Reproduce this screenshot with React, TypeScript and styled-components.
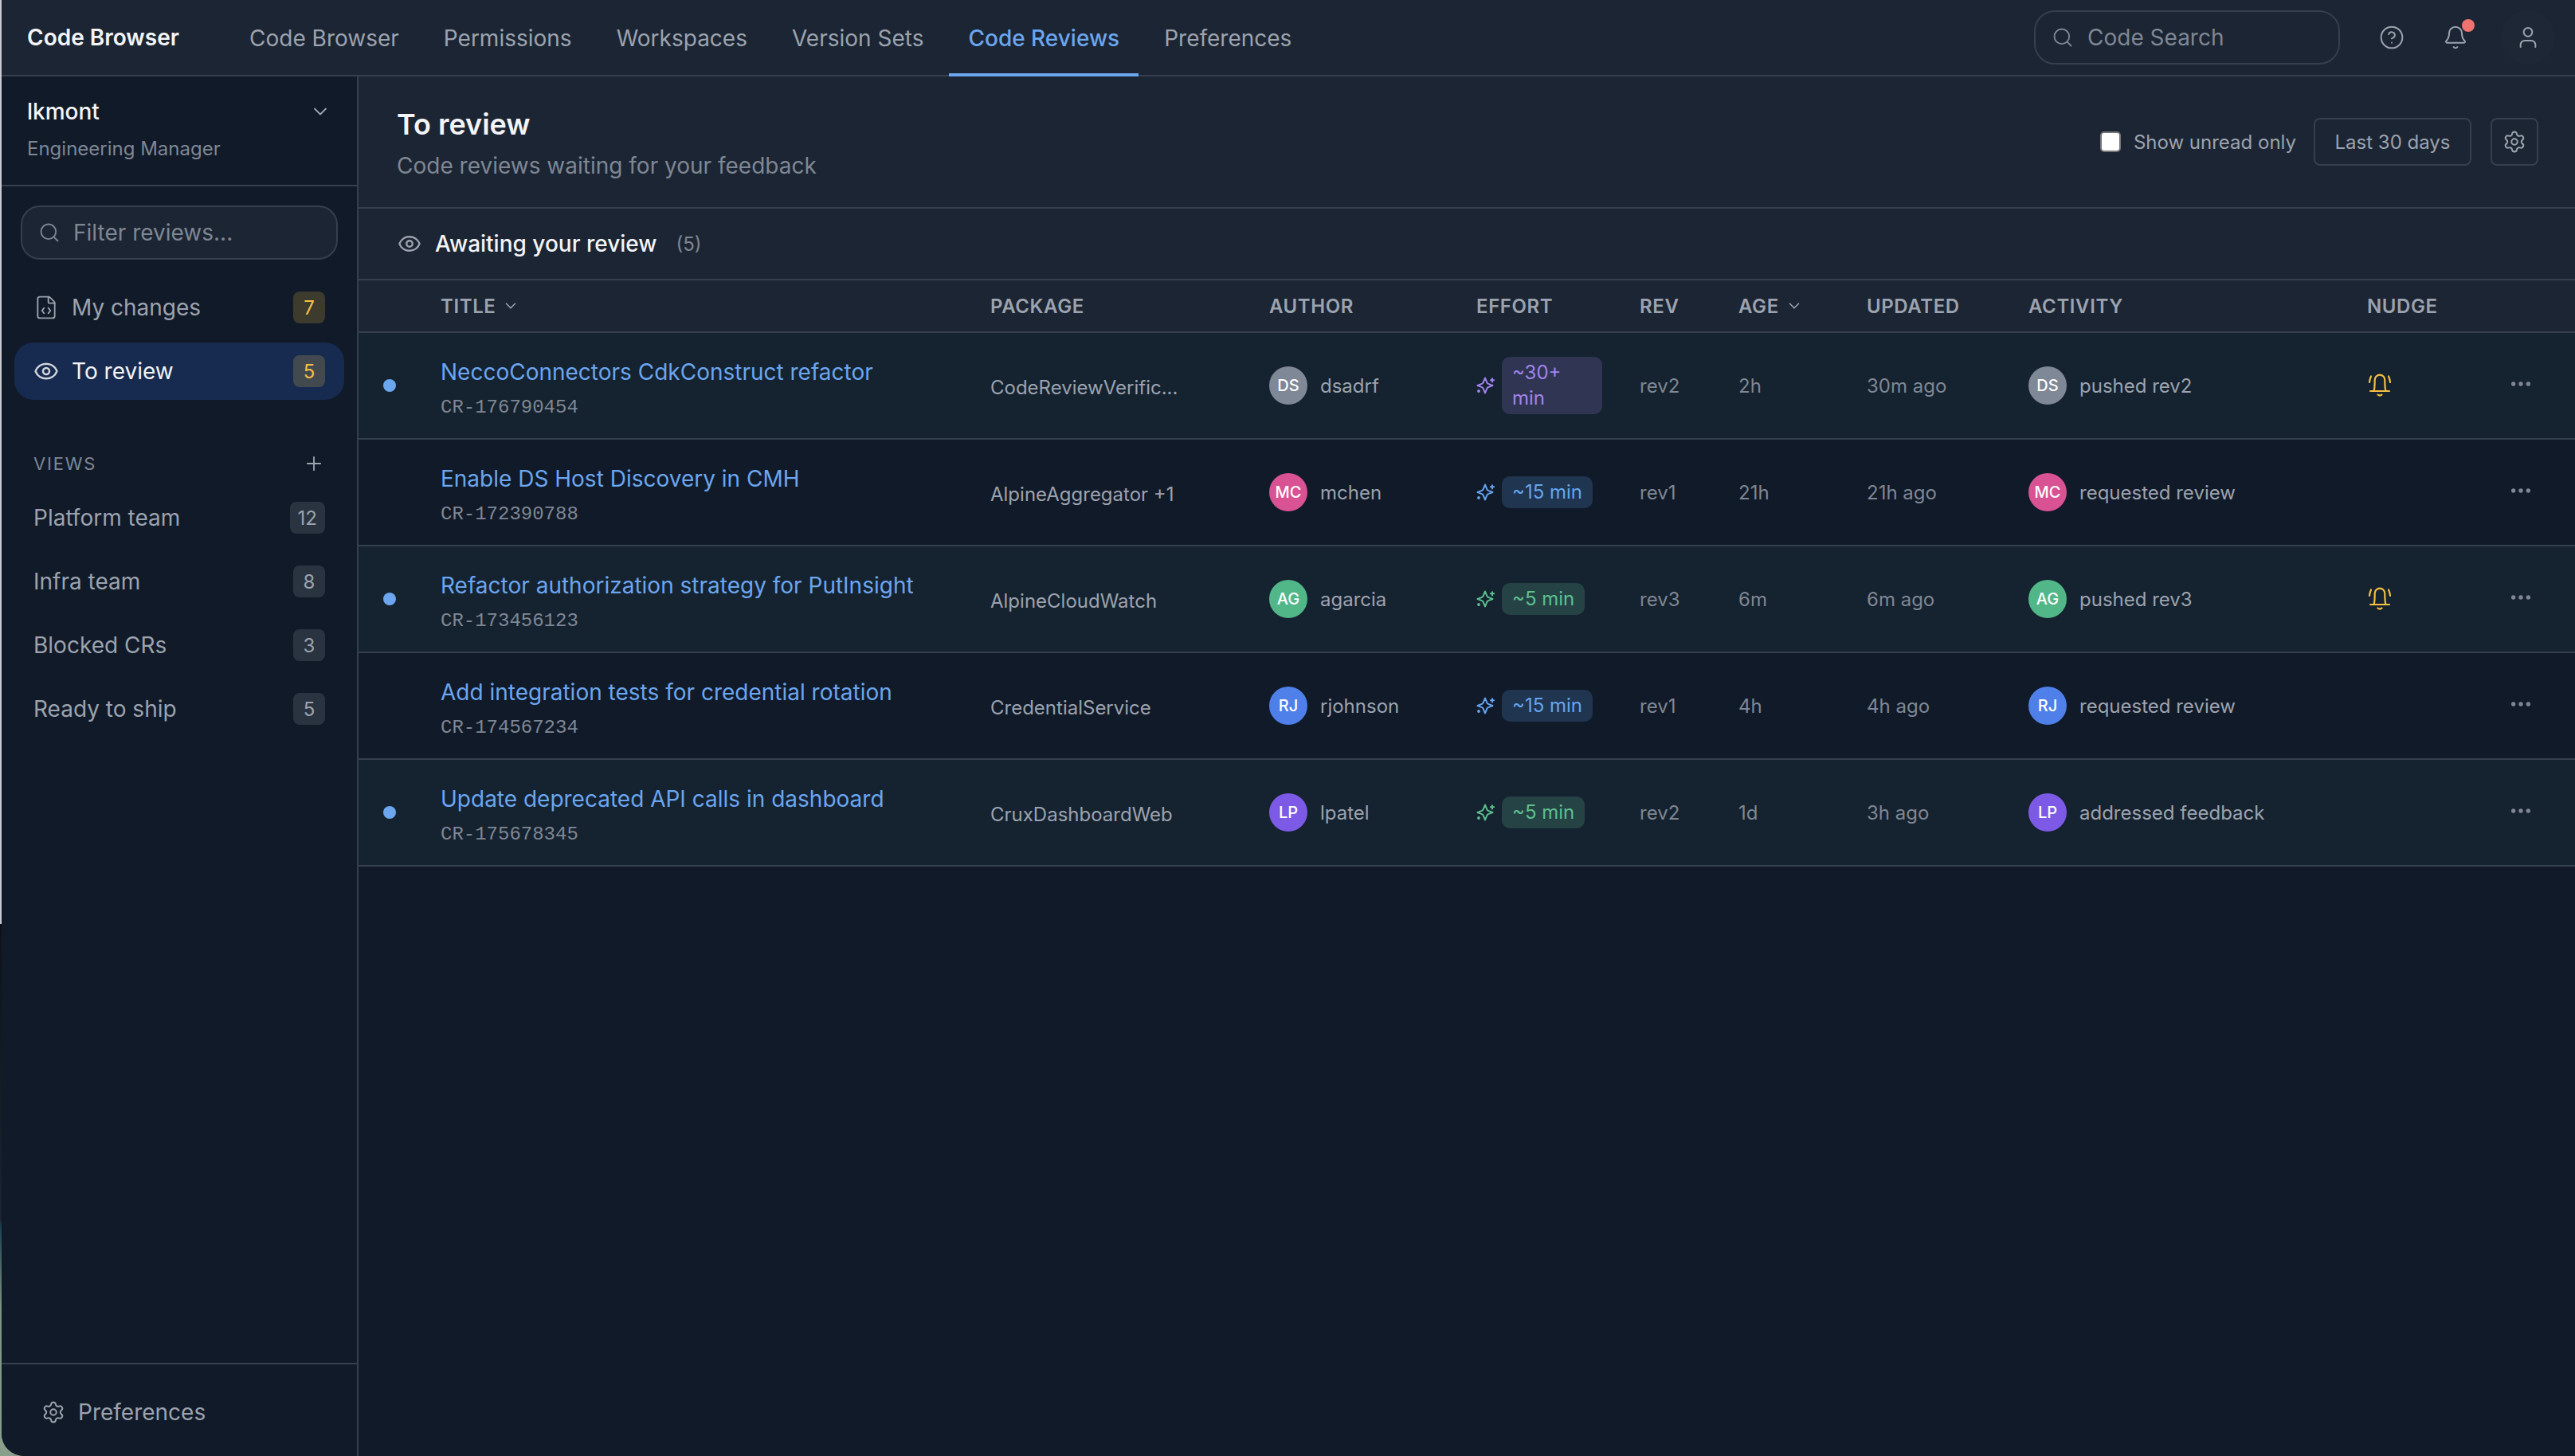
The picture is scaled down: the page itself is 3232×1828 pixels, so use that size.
import styled, { createGlobalStyle } from "styled-components";
import {
  Bell,
  ChevronDown,
  CircleHelp,
  Ellipsis,
  Eye,
  FileCode,
  Plus,
  Search,
  Settings,
  User,
} from "lucide-react";

const colors = {
  panel: "#1c2533",
  base: "#111a28",
  unread: "#15222f",
  line: "#353f4d",
  white: "#f3f4f6",
  text: "#9ca3af",
  muted: "#7f8794",
  blue: "#6ba6ef",
  amber: "#f5bf42",
};

type Tone = "purple" | "blue" | "green";

const tones: Record<Tone, { fg: string; bg: string }> = {
  purple: { fg: "#a284ec", bg: "#2f3553" },
  blue: { fg: "#64a5f0", bg: "#20354f" },
  green: { fg: "#5dc08f", bg: "#254245" },
};

const navLinks = [
  "Code Browser",
  "Permissions",
  "Workspaces",
  "Version Sets",
  "Code Reviews",
  "Preferences",
];

const views = [
  { name: "Platform team", count: 12 },
  { name: "Infra team", count: 8 },
  { name: "Blocked CRs", count: 3 },
  { name: "Ready to ship", count: 5 },
];

const reviews = [
  {
    title: "NeccoConnectors CdkConstruct refactor",
    cr: "CR-176790454",
    pkg: "CodeReviewVerific...",
    initials: "DS",
    author: "dsadrf",
    avatar: "#7f8896",
    effort: "~30+ min",
    tone: "purple" as Tone,
    rev: "rev2",
    age: "2h",
    updated: "30m ago",
    activity: "pushed rev2",
    unread: true,
    nudge: true,
  },
  {
    title: "Enable DS Host Discovery in CMH",
    cr: "CR-172390788",
    pkg: "AlpineAggregator +1",
    initials: "MC",
    author: "mchen",
    avatar: "#d95294",
    effort: "~15 min",
    tone: "blue" as Tone,
    rev: "rev1",
    age: "21h",
    updated: "21h ago",
    activity: "requested review",
    unread: false,
    nudge: false,
  },
  {
    title: "Refactor authorization strategy for PutInsight",
    cr: "CR-173456123",
    pkg: "AlpineCloudWatch",
    initials: "AG",
    author: "agarcia",
    avatar: "#52b788",
    effort: "~5 min",
    tone: "green" as Tone,
    rev: "rev3",
    age: "6m",
    updated: "6m ago",
    activity: "pushed rev3",
    unread: true,
    nudge: true,
  },
  {
    title: "Add integration tests for credential rotation",
    cr: "CR-174567234",
    pkg: "CredentialService",
    initials: "RJ",
    author: "rjohnson",
    avatar: "#4f80ea",
    effort: "~15 min",
    tone: "blue" as Tone,
    rev: "rev1",
    age: "4h",
    updated: "4h ago",
    activity: "requested review",
    unread: false,
    nudge: false,
  },
  {
    title: "Update deprecated API calls in dashboard",
    cr: "CR-175678345",
    pkg: "CruxDashboardWeb",
    initials: "LP",
    author: "lpatel",
    avatar: "#7c5ae6",
    effort: "~5 min",
    tone: "green" as Tone,
    rev: "rev2",
    age: "1d",
    updated: "3h ago",
    activity: "addressed feedback",
    unread: true,
    nudge: false,
  },
];

const NudgeBell = () => (
  <svg
    width="32"
    height="32"
    viewBox="0 0 32 32"
    fill="none"
    stroke={colors.amber}
    strokeWidth="2.2"
    strokeLinecap="round"
    strokeLinejoin="round"
  >
    <path d="M4 23h24" />
    <path d="M8.500 23C9.500 20 9.700 15 9.700 9a6.300 6.300 0 0 1 12.600 0c0 6 .2 11 1.200 14" />
    <path d="M13.500 27.500q2.500 2 5 0" />
    <path d="M3 12c.2-2.500.8-5 2-7.500" />
    <path d="M29 12c-.2-2.500-.8-5-2-7.500" />
  </svg>
);

const EffortIcon = ({ color }: { color: string }) => (
  <svg
    width="24"
    height="24"
    viewBox="0 0 24 24"
    fill="none"
    stroke={color}
    strokeWidth="2"
    strokeLinecap="round"
    strokeLinejoin="round"
  >
    <path d="M11 2.500l2.300 5.700q.5 1.300 1.700 1.700l5.500 2.100-5.500 2.100q-1.200.4-1.700 1.700L11 21.500l-2.300-5.700q-.5-1.300-1.700-1.700L1.500 12 7 9.900q1.200-.4 1.700-1.700z" />
    <path d="M20 3.200v4.200M17.900 5.300h4.200" />
    <circle cx="3" cy="19" r="0.9" fill={color} />
  </svg>
);

const App = () => {
  return (
    <>
      <GlobalStyle />
      <Shell>
        <TopBar>
          <Brand>Code Browser</Brand>
          <TopNav>
            {navLinks.map((link) => (
              <TopLink key={link} $active={link === "Code Reviews"}>
                {link}
              </TopLink>
            ))}
          </TopNav>
          <TopActions>
            <CodeSearch>
              <Search size={28} strokeWidth={1.6} color={colors.muted} />
              <SearchInput placeholder="Code Search" readOnly />
            </CodeSearch>
            <TopIcon>
              <CircleHelp size={32} strokeWidth={1.5} />
            </TopIcon>
            <TopIcon>
              <Bell size={32} strokeWidth={1.5} />
              <NotifyDot />
            </TopIcon>
            <UserButton>
              <User size={32} strokeWidth={1.5} />
            </UserButton>
          </TopActions>
        </TopBar>
        <Body>
          <Sidebar>
            <UserBlock>
              <UserRow>
                <UserName>lkmont</UserName>
                <ChevronDown size={28} strokeWidth={1.6} color={colors.text} />
              </UserRow>
              <UserRole>Engineering Manager</UserRole>
            </UserBlock>
            <FilterWrap>
              <FilterBox>
                <Search size={28} strokeWidth={1.6} color={colors.muted} />
                <FilterInput placeholder="Filter reviews..." readOnly />
              </FilterBox>
            </FilterWrap>
            <SideMenu>
              <SideItem>
                <SideIcon>
                  <FileCode size={32} strokeWidth={1.4} />
                </SideIcon>
                <SideLabel>My changes</SideLabel>
                <AmberCount>7</AmberCount>
              </SideItem>
              <SideItem $active>
                <SideIcon $active>
                  <Eye size={32} strokeWidth={1.9} />
                </SideIcon>
                <SideLabel>To review</SideLabel>
                <AmberCount $active>5</AmberCount>
              </SideItem>
            </SideMenu>
            <ViewsHead>
              <ViewsTitle>VIEWS</ViewsTitle>
              <Plus size={28} strokeWidth={1.6} color={colors.text} />
            </ViewsHead>
            <ViewList>
              {views.map((view) => (
                <ViewItem key={view.name}>
                  <span>{view.name}</span>
                  <ViewCount>{view.count}</ViewCount>
                </ViewItem>
              ))}
            </ViewList>
            <SideFooter>
              <Settings size={30} strokeWidth={1.6} />
              <span>Preferences</span>
            </SideFooter>
          </Sidebar>
          <Main>
            <PageHead>
              <div>
                <PageTitle>To review</PageTitle>
                <PageSub>Code reviews waiting for your feedback</PageSub>
              </div>
              <PageTools>
                <UnreadLabel>
                  <UnreadCheck type="checkbox" />
                  Show unread only
                </UnreadLabel>
                <RangeButton>Last 30 days</RangeButton>
                <GearButton>
                  <Settings size={30} strokeWidth={1.6} />
                </GearButton>
              </PageTools>
            </PageHead>
            <SectionHead>
              <Eye size={30} strokeWidth={1.9} color={colors.text} />
              <SectionTitle>Awaiting your review</SectionTitle>
              <SectionCount>(5)</SectionCount>
            </SectionHead>
            <HeadRow>
              <span />
              <HeadCell>
                TITLE <ChevronDown size={22} strokeWidth={1.8} />
              </HeadCell>
              <HeadCell>PACKAGE</HeadCell>
              <HeadCell>AUTHOR</HeadCell>
              <HeadCell>EFFORT</HeadCell>
              <HeadCell>REV</HeadCell>
              <HeadCell>
                AGE <ChevronDown size={22} strokeWidth={1.8} />
              </HeadCell>
              <HeadCell>UPDATED</HeadCell>
              <HeadCell>ACTIVITY</HeadCell>
              <HeadCell>NUDGE</HeadCell>
              <span />
            </HeadRow>
            {reviews.map((item) => (
              <ReviewRow key={item.cr} $unread={item.unread}>
                <DotCell>{item.unread && <UnreadDot />}</DotCell>
                <TitleCell>
                  <ReviewTitle>{item.title}</ReviewTitle>
                  <ReviewId>{item.cr}</ReviewId>
                </TitleCell>
                <PackageName>{item.pkg}</PackageName>
                <PersonCell>
                  <Avatar $color={item.avatar}>{item.initials}</Avatar>
                  {item.author}
                </PersonCell>
                <EffortCell>
                  <EffortIcon color={tones[item.tone].fg} />
                  <EffortBadge $tone={item.tone}>{item.effort}</EffortBadge>
                </EffortCell>
                <Dim>{item.rev}</Dim>
                <Dim>{item.age}</Dim>
                <Dim>{item.updated}</Dim>
                <PersonCell>
                  <Avatar $color={item.avatar}>{item.initials}</Avatar>
                  {item.activity}
                </PersonCell>
                <NudgeCell>{item.nudge && <NudgeBell />}</NudgeCell>
                <MoreCell>
                  <Ellipsis size={32} strokeWidth={2} />
                </MoreCell>
              </ReviewRow>
            ))}
          </Main>
        </Body>
      </Shell>
    </>
  );
};

export default App;

const GlobalStyle = createGlobalStyle`
  html, body {
    margin: 0;
    padding: 0;
    height: 100%;
  }
  body {
    background: linear-gradient(
      to bottom,
      #c9cacf 0,
      #c9cacf 1160px,
      #0d1218 1160px,
      #1b2430 1530px,
      #1d4152 1540px,
      #7c9480 1640px,
      #8aa08c 100%
    );
    font-family: Inter, "Noto Sans", sans-serif;
    overflow: hidden;
  }
  * {
    box-sizing: border-box;
  }
`;

const Shell = styled.div`
  display: flex;
  flex-direction: column;
  margin-left: 2px;
  height: 1828px;
  background-color: ${colors.base};
  border-bottom-left-radius: 28px;
  overflow: hidden;
`;

const TopBar = styled.header`
  display: flex;
  align-items: stretch;
  flex: 0 0 96px;
  padding: 0 0 0 32px;
  background-color: ${colors.panel};
  border-bottom: 2px solid ${colors.line};
`;

const Brand = styled.div`
  display: flex;
  align-items: center;
  width: 255px;
  color: ${colors.white};
  font-size: 28px;
  font-weight: 600;
`;

const TopNav = styled.nav`
  display: flex;
  gap: 8px;
`;

const TopLink = styled.a<{ $active?: boolean }>`
  display: flex;
  align-items: center;
  padding: 0 24px;
  margin-bottom: -2px;
  color: ${(p) => (p.$active ? colors.blue : colors.text)};
  font-size: 28px;
  font-weight: ${(p) => (p.$active ? 500 : 400)};
  border-bottom: 4px solid ${(p) => (p.$active ? colors.blue : "transparent")};
  border-top: 4px solid transparent;
`;

const TopActions = styled.div`
  display: flex;
  align-items: center;
  margin-left: auto;
  padding-right: 25px;
`;

const CodeSearch = styled.div`
  display: flex;
  align-items: center;
  gap: 17px;
  width: 384px;
  height: 68px;
  margin-right: 25px;
  padding: 0 20px;
  border: 2px solid ${colors.line};
  border-radius: 26px;
`;

const SearchInput = styled.input`
  flex: 1;
  width: 0;
  min-width: 0;
  padding: 0;
  background: transparent;
  border: 0;
  outline: 0;
  color: ${colors.text};
  font-family: inherit;
  font-size: 28px;
  &::placeholder {
    color: ${colors.muted};
  }
`;

const TopIcon = styled.button`
  position: relative;
  display: flex;
  justify-content: center;
  align-items: center;
  width: 80px;
  height: 68px;
  padding: 0;
  background: none;
  border: 0;
  color: ${colors.text};
`;

const UserButton = styled(TopIcon)`
  width: 68px;
  margin-left: 17px;
  background-color: #1e2736;
  border-radius: 50%;
`;

const NotifyDot = styled.span`
  position: absolute;
  top: 11px;
  right: 16px;
  width: 16px;
  height: 16px;
  border-radius: 50%;
  background-color: #ef7470;
`;

const Body = styled.div`
  display: flex;
  flex: 1;
  min-height: 0;
`;

const Sidebar = styled.aside`
  display: flex;
  flex-direction: column;
  flex: 0 0 448px;
  width: 448px;
  min-width: 0;
  background-color: ${colors.base};
  border-right: 2px solid ${colors.line};
`;

const UserBlock = styled.div`
  flex: 0 0 138px;
  padding: 26px 32px 0;
  border-bottom: 2px solid ${colors.line};
`;

const UserRow = styled.div`
  display: flex;
  justify-content: space-between;
  align-items: center;
  height: 36px;
`;

const UserName = styled.div`
  color: ${colors.white};
  font-size: 28px;
  font-weight: 500;
`;

const UserRole = styled.div`
  margin-top: 14px;
  color: ${colors.muted};
  font-size: 24px;
`;

const FilterWrap = styled.div`
  padding: 24px 24px 0;
`;

const FilterBox = styled.div`
  display: flex;
  align-items: center;
  gap: 16px;
  height: 68px;
  padding: 0 20px;
  background-color: ${colors.panel};
  border: 2px solid ${colors.line};
  border-radius: 24px;
`;

const FilterInput = styled.input`
  flex: 1;
  width: 0;
  min-width: 0;
  padding: 0;
  background: transparent;
  border: 0;
  outline: 0;
  font-family: inherit;
  font-size: 28px;
  &::placeholder {
    color: ${colors.muted};
  }
`;

const SideMenu = styled.div`
  display: flex;
  flex-direction: column;
  gap: 8px;
  padding: 24px 16px 0;
`;

const SideItem = styled.div<{ $active?: boolean }>`
  display: flex;
  align-items: center;
  height: 72px;
  padding: 0 24px;
  color: ${(p) => (p.$active ? colors.white : colors.text)};
  background-color: ${(p) => (p.$active ? "#172a4f" : "transparent")};
  border-radius: 24px;
  font-size: 28px;
`;

const SideIcon = styled.span<{ $active?: boolean }>`
  display: flex;
  justify-content: center;
  align-items: center;
  width: 32px;
  margin-right: 16px;
  color: ${(p) => (p.$active ? "#d1d5db" : colors.text)};
`;

const SideLabel = styled.span`
  flex: 1;
`;

const AmberCount = styled.span<{ $active?: boolean }>`
  display: flex;
  justify-content: center;
  align-items: center;
  width: 40px;
  height: 40px;
  color: ${colors.amber};
  background-color: ${(p) => (p.$active ? "#42494f" : "#3d3a2e")};
  border-radius: 8px;
  font-size: 24px;
`;

const ViewsHead = styled.div`
  display: flex;
  justify-content: space-between;
  align-items: center;
  margin-top: 64px;
  padding: 0 40px;
  height: 32px;
`;

const ViewsTitle = styled.span`
  color: ${colors.muted};
  font-size: 22px;
  font-weight: 400;
  letter-spacing: 1.800px;
`;

const ViewList = styled.div`
  display: flex;
  flex-direction: column;
  margin-top: 12px;
`;

const ViewItem = styled.div`
  display: flex;
  justify-content: space-between;
  align-items: center;
  height: 80px;
  padding: 0 40px;
  color: ${colors.text};
  font-size: 28px;
`;

const ViewCount = styled.span`
  display: flex;
  justify-content: center;
  align-items: center;
  min-width: 40px;
  height: 40px;
  padding: 0 10px;
  color: ${colors.text};
  background-color: #2a3440;
  border-radius: 8px;
  font-size: 24px;
`;

const SideFooter = styled.div`
  display: flex;
  align-items: center;
  gap: 16px;
  height: 117px;
  margin-top: auto;
  padding: 4px 50px 0;
  color: ${colors.text};
  border-top: 2px solid ${colors.line};
  font-size: 28px;
`;

const Main = styled.main`
  flex: 1;
  min-width: 0;
`;

const PageHead = styled.div`
  display: flex;
  justify-content: space-between;
  align-items: center;
  height: 166px;
  padding: 0 46px 0 48px;
  background-color: ${colors.panel};
  border-bottom: 2px solid ${colors.line};
`;

const PageTitle = styled.h1`
  margin: 4px 0 0;
  color: ${colors.white};
  font-size: 36px;
  font-weight: 600;
  line-height: 44px;
`;

const PageSub = styled.p`
  margin: 12px 0 0;
  color: ${colors.muted};
  font-size: 28px;
  line-height: 36px;
`;

const PageTools = styled.div`
  display: flex;
  align-items: center;
  gap: 24px;
`;

const UnreadLabel = styled.label`
  display: flex;
  align-items: center;
  gap: 16px;
  margin-right: -2px;
  color: ${colors.text};
  font-size: 24px;
`;

const UnreadCheck = styled.input`
  appearance: none;
  width: 26px;
  height: 26px;
  margin: 0;
  background-color: #fff;
  border: 2px solid #767676;
  border-radius: 5px;
`;

const RangeButton = styled.button`
  width: 198px;
  height: 60px;
  padding: 0;
  color: ${colors.text};
  background-color: ${colors.panel};
  border: 2px solid ${colors.line};
  border-radius: 8px;
  font-family: inherit;
  font-size: 24px;
`;

const GearButton = styled.button`
  display: flex;
  justify-content: center;
  align-items: center;
  width: 60px;
  height: 60px;
  padding: 0;
  color: ${colors.text};
  background-color: ${colors.panel};
  border: 2px solid ${colors.line};
  border-radius: 8px;
`;

const SectionHead = styled.div`
  display: flex;
  align-items: center;
  height: 90px;
  padding: 0 49px;
  background-color: ${colors.panel};
  border-bottom: 2px solid ${colors.line};
`;

const SectionTitle = styled.span`
  margin-left: 17px;
  color: ${colors.white};
  font-size: 28px;
  font-weight: 500;
`;

const SectionCount = styled.span`
  margin-left: 24px;
  color: ${colors.muted};
  font-size: 24px;
`;

const tableColumns = "103px 690px 350px 260px 205px 124px 161px 203px 425px 170px 1fr";

const HeadRow = styled.div`
  display: grid;
  grid-template-columns: ${tableColumns};
  align-items: center;
  height: 66px;
  background-color: ${colors.panel};
  border-bottom: 2px solid ${colors.line};
`;

const HeadCell = styled.div`
  display: flex;
  align-items: center;
  gap: 8px;
  color: ${colors.text};
  font-size: 24px;
  font-weight: 600;
  letter-spacing: 0.6px;
`;

const ReviewRow = styled.div<{ $unread: boolean }>`
  display: grid;
  grid-template-columns: ${tableColumns};
  align-items: center;
  height: 134px;
  background-color: ${(p) => (p.$unread ? colors.unread : colors.base)};
  border-bottom: 2px solid ${colors.line};
`;

const DotCell = styled.div`
  display: flex;
  padding-left: 31px;
`;

const UnreadDot = styled.span`
  width: 16px;
  height: 16px;
  border-radius: 50%;
  background-color: ${colors.blue};
`;

const TitleCell = styled.div`
  padding-top: 9px;
`;

const ReviewTitle = styled.div`
  color: ${colors.blue};
  font-size: 28px;
  line-height: 36px;
`;

const ReviewId = styled.div`
  margin-top: 11px;
  color: ${colors.muted};
  font-family: "Liberation Mono", monospace;
  font-size: 24px;
  line-height: 32px;
`;

const PackageName = styled.div`
  padding-top: 4px;
  color: ${colors.text};
  font-size: 24px;
`;

const PersonCell = styled.div`
  display: flex;
  align-items: center;
  gap: 16px;
  color: ${colors.text};
  font-size: 24px;
`;

const Avatar = styled.span<{ $color: string }>`
  display: flex;
  justify-content: center;
  align-items: center;
  width: 48px;
  height: 48px;
  color: #fff;
  background-color: ${(p) => p.$color};
  border-radius: 50%;
  font-size: 20px;
  font-weight: 500;
`;

const EffortCell = styled.div`
  display: flex;
  align-items: center;
  gap: 8px;
  padding-right: 40px;
`;

const EffortBadge = styled.span<{ $tone: Tone }>`
  flex: 0 1 auto;
  max-width: 126px;
  padding: 4px 13px;
  color: ${(p) => tones[p.$tone].fg};
  background-color: ${(p) => tones[p.$tone].bg};
  border-radius: 10px;
  font-size: 24px;
  line-height: 32px;
`;

const Dim = styled.div`
  color: ${colors.muted};
  font-size: 24px;
`;

const NudgeCell = styled.div`
  display: flex;
  align-items: center;
`;

const MoreCell = styled.div`
  display: flex;
  padding: 0 0 4px 7px;
  color: ${colors.muted};
`;
